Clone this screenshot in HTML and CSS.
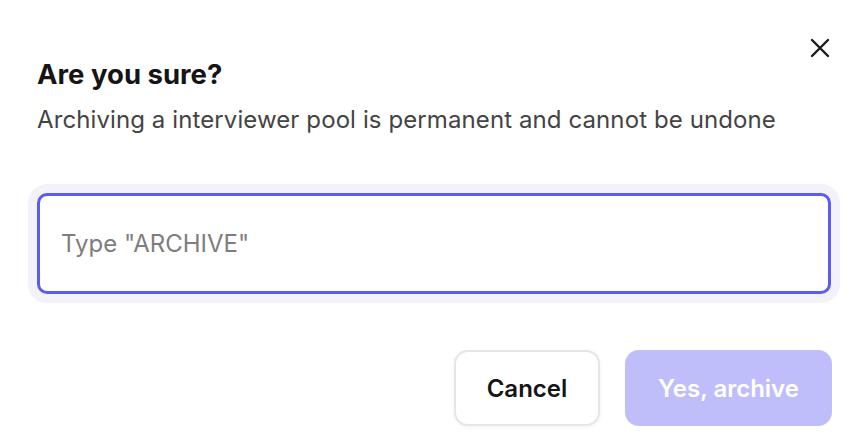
FILE: index.html
```html
<!DOCTYPE html>
<html lang="en">
<head>
<meta charset="utf-8">
<title>Archive pool</title>
<link rel="stylesheet" href="styles.css">
</head>
<body>
<div class="dialog">
  <div class="close-row">
    <button class="close" aria-label="Close">
      <svg width="20" height="20" viewBox="0 0 20 20"><path d="M2 2L18 18M18 2L2 18" stroke="#1a1a1a" stroke-width="2.4" stroke-linecap="round"/></svg>
    </button>
  </div>
  <h2 class="title">Are you sure?</h2>
  <p class="desc">Archiving a interviewer pool is permanent and cannot be undone</p>
  <div class="field">
    <input class="input" type="text" placeholder="Type &quot;ARCHIVE&quot;">
  </div>
  <div class="actions">
    <button class="btn btn-cancel">Cancel</button>
    <button class="btn btn-primary" disabled>Yes, archive</button>
  </div>
</div>
</body>
</html>
```
FILE: styles.css
```css
* { box-sizing: border-box; }
html, body { margin: 0; background: #fff; }
body { font-family: Inter, "Noto Sans", sans-serif; color: #111; }
.dialog { padding: 38px 37px 18px 37px; display: flex; flex-direction: column; }
.close-row { display: flex; justify-content: flex-end; height: 20px; }
.close { width: 20px; height: 20px; padding: 0; margin-right: 1px; border: 0; background: none; display: block; }
.close svg { display: block; }
.title { margin: 0; font-size: 27.5px; line-height: 32px; font-weight: 700; color: #151515; }
.desc { margin: 16px 0 0; font-size: 24px; line-height: 28px; color: #444; letter-spacing: 0.1px; }
.field { margin-top: 59px; }
.input { display: block; width: 100%; height: 101px; border: 3px solid #5b5cf0; border-radius: 10px; box-shadow: 0 0 0 9px #f3f1fa; padding: 0 21px; font-family: Inter, sans-serif; font-size: 24px; color: #111; outline: none; background: #fff; }
.input::placeholder { color: #7e7e7e; }
.actions { display: flex; justify-content: flex-end; gap: 25px; margin-top: 56px; margin-right: -1px; }
.btn { height: 76px; border-radius: 14px; font-family: Inter, sans-serif; font-size: 24px; font-weight: 600; padding: 0; }
.btn-cancel { width: 146px; background: #fff; border: 2px solid #e6e6e6; color: #151515; box-shadow: 0 1px 4px rgba(0,0,0,0.06); }
.btn-primary { width: 207px; background: #c0befa; border: 0; color: #fff; }
```
